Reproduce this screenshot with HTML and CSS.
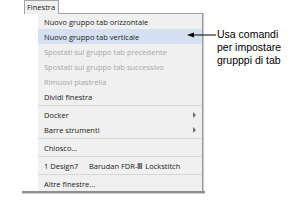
FILE: index.html
```html
<!DOCTYPE html>
<html>
<head>
<meta charset="utf-8">
<link rel="stylesheet" href="styles.css">
</head>
<body>
<div class="scene">
  <div class="tab">Finestra</div>
  <div class="menu">
    <div class="panel">
      <div class="item">Nuovo gruppo tab orizzontale</div>
      <div class="item active">Nuovo gruppo tab verticale</div>
      <div class="item disabled">Spostati sul gruppo tab precedente</div>
      <div class="item disabled">Spostati sul gruppo tab successivo</div>
      <div class="item disabled">Rimuovi piastrella</div>
      <div class="item">Dividi finestra</div>
      <div class="sep"></div>
      <div class="item">Docker<span class="sub"></span></div>
      <div class="item">Barre strumenti<span class="sub"></span></div>
      <div class="sep"></div>
      <div class="item">Chiosco...</div>
      <div class="sep"></div>
      <div class="item"><span class="col1">1 Design7</span><span>Barudan FDR-Ⅲ Lockstitch</span></div>
      <div class="sep"></div>
      <div class="item">Altre finestre...</div>
    </div>
  </div>
  <div class="callout">
    <svg class="arrow" width="29" height="8" viewBox="0 0 29 8"><line x1="4" y1="4" x2="29" y2="4" stroke="#000" stroke-width="1"/><polygon points="0,4 7,1.5 7,6.5" fill="#000"/></svg>
    <div class="note">Usa comandi<br>per impostare<br>grupppi di tab</div>
  </div>
</div>
</body>
</html>
```
FILE: styles.css
```css
html, body {
  margin: 0;
  padding: 0;
  background: #ffffff;
}
.scene {
  position: relative;
  width: 304px;
  height: 207px;
  font-family: "Open Sans", "Liberation Sans", sans-serif;
  font-size: 7.5px;
  color: #1a1a1a;
}
.tab {
  position: relative;
  z-index: 2;
  margin-left: 24px;
  width: 31px;
  height: 13px;
  line-height: 12px;
  padding-left: 2px;
  border: 1px solid #a3a3a3;
  border-bottom: none;
  background: #f0f0f0;
  margin-bottom: -1px;
  box-sizing: content-box;
}
.menu {
  margin-left: 22px;
  width: 183px;
  padding-left: 16px;
  box-sizing: border-box;
  border-bottom: 2px solid #8f8f8f;
  box-shadow: 0 1px 0 #cfcfcf;
}
.panel {
  width: 165px;
  box-sizing: border-box;
  background: #f0f0f0;
  border-top: 1px solid #a3a3a3;
  border-right: 1px solid #9a9a9a;
  box-shadow: 1px 0 0 #c8c8c8;
}
.item {
  display: flex;
  align-items: center;
  height: 15px;
  padding-left: 6px;
  white-space: nowrap;
}
.item.active {
  background: #d5e1f2;
}
.item.disabled {
  color: #a6a6a6;
}
.sep {
  height: 3px;
  display: flex;
  align-items: center;
}
.sep::before {
  content: "";
  display: block;
  width: 100%;
  height: 1px;
  background: #d7d7d7;
}
.sub {
  margin-left: auto;
  margin-right: 6px;
  width: 0;
  height: 0;
  border-left: 3px solid #707070;
  border-top: 3px solid transparent;
  border-bottom: 3px solid transparent;
}
.col1 {
  width: 45px;
}
.callout {
  position: absolute;
  left: 187px;
  top: 28px;
  display: flex;
  align-items: flex-start;
}
.arrow {
  display: block;
  margin-top: 3px;
}
.note {
  margin-left: 1px;
  font-family: "Liberation Sans", Arial, sans-serif;
  font-size: 10.5px;
  line-height: 13px;
  color: #000;
}
```
